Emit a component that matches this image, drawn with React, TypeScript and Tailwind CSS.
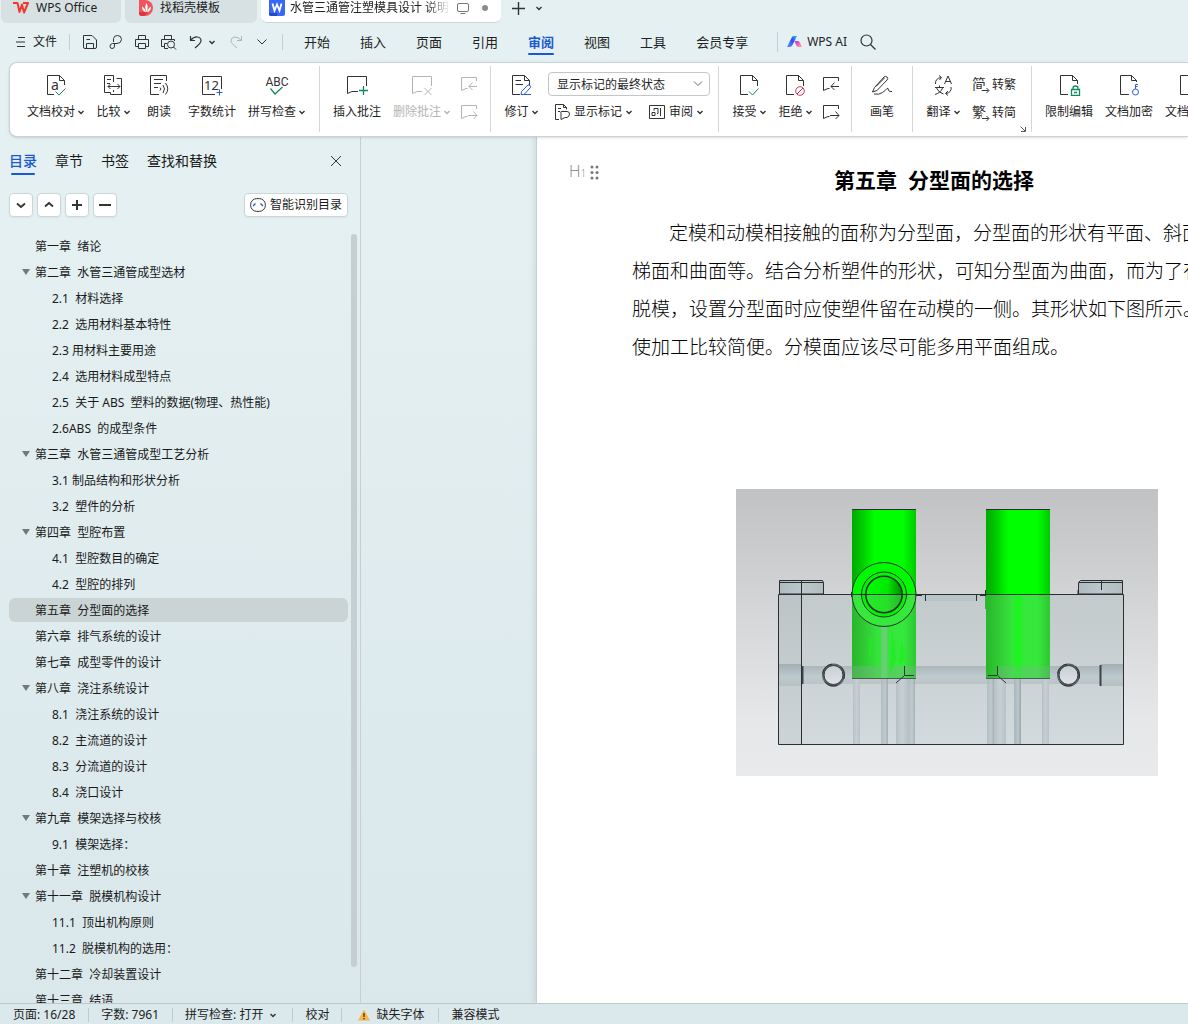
import React, { useState } from "react";

type Kids = { children?: React.ReactNode };

const INK = "#333333";
const GREEN = "#0f8a5f";
const BLUE = "#2b59e0";

/* ---------- icons ---------- */

function Ico({ children, w = 24, h = 22, color = INK }: Kids & { w?: number; h?: number; color?: string }) {
  return (
    <svg width={w} height={h} viewBox={`0 0 ${w} ${h}`} fill="none" stroke={color} strokeWidth="1" className="block shrink-0" aria-hidden="true">
      {children}
    </svg>
  );
}

function Chevron({ color = INK }: { color?: string }) {
  return (
    <svg width="6" height="16" viewBox="0 0 6 16" fill="none" stroke={color} strokeWidth="1.4" className="block shrink-0" aria-hidden="true">
      <path d="M.5 7 3 9.500 5.500 7" />
    </svg>
  );
}

const DocSheet = () => <path d="M11 20.500H3.500V1.500H15.500L20.500 6.500V12M15.500 1.500V6.500H20.500" />;

const ProofIcon = () => (
  <Ico>
    <path d="M10 20.500H3.500V1.500H15.500L20.500 6.500V11M15.500 1.500V6.500H20.500" />
    <text x="7" y="16" fontSize="14" fill={INK} stroke="none" fontFamily="Noto Sans">a</text>
    <path d="M11.500 17.500 15 21 21.500 14.500" stroke={GREEN} />
  </Ico>
);
const CompareIcon = () => (
  <Ico>
    <path d="M12.500 5V1.500H3.500V18.500H9.500V20.500H20.500V4.500H15.500M12.500 8V4.500M12.500 18V16M6 5.500H10M6 9.500H9M7 12.500H19M9.500 10 7 12.500 9.500 15M16.500 10 19 12.500 16.500 15" />
  </Ico>
);
const ReadIcon = () => (
  <Ico>
    <path d="M19.500 7V1.500H3.500V20.500H12M7 5.500H16M7 9.500H14M7 13.500H11M13 13.500Q15 15 13 16.500M16 11Q19 15 16 19M18.500 9Q23 15 18.500 20.500" />
  </Ico>
);
const CountIcon = () => (
  <Ico>
    <path d="M15 20.500H2.500V2.500H21.500V15" />
    <text x="4" y="15.500" fontSize="13" fill={INK} stroke="none" fontFamily="Noto Sans">12</text>
    <path d="M16.500 18.500H22.500M19.500 15.500V21.500" stroke={BLUE} />
  </Ico>
);
const SpellIcon = () => (
  <Ico>
    <text x="12" y="12" fontSize="12" textAnchor="middle" fill={INK} stroke="none" fontFamily="Roboto">ABC</text>
    <path d="M5.500 14.500 10 20 17.500 13" stroke={GREEN} strokeWidth="1.200" />
  </Ico>
);
const AddNoteIcon = () => (
  <Ico>
    <path d="M13 17.500H7L2.500 19.500V2.500H21.500V12" />
    <path d="M14 16.500H23M18.500 12V21" stroke={GREEN} strokeWidth="1.300" />
  </Ico>
);
const DelNoteIcon = () => (
  <Ico color="#b4b4b4">
    <path d="M12 17.500H7L2.500 19.500V2.500H21.500V12M14.500 14 21.500 21M21.500 14 14.500 21" />
  </Ico>
);
const StepIcon = ({ next = false, color = INK }: { next?: boolean; color?: string }) => (
  <Ico w={18} h={16} color={color}>
    <path d="M16.500 5V1.500H1.500V14.500L6 12.500H7.500" />
    {next ? <path d="M8 11.500H17M13.500 7.500 17 11.500 13.500 15" /> : <path d="M9 10.500H17M12.500 6.500 9 10.500 12.500 14" />}
  </Ico>
);
const ReviseIcon = () => (
  <Ico>
    <DocSheet />
    <path d="M6.500 6.500H12M6.500 10.500H14" />
    <path d="M12.500 17.500 19 11Q20 10.500 21 11.500T21.500 13.500L15 20.500H12Z M13 20.500H22" stroke={BLUE} />
  </Ico>
);
const AcceptIcon = () => (
  <Ico>
    <DocSheet />
    <path d="M12 17.500 15.500 21 21.500 14.500" stroke={GREEN} />
  </Ico>
);
const RejectIcon = () => (
  <Ico>
    <DocSheet />
    <g stroke="#cc3657"><circle cx="17" cy="17" r="4.300" /><path d="M14 20 20 14" /></g>
  </Ico>
);
const LockIcon = () => (
  <Ico>
    <path d="M11 20.500H3.500V1.500H15.500L20.500 6.500V10M15.500 1.500V6.500H20.500" />
    <path d="M14.500 15.500H22.500V21.500H14.500ZM16 15.500V14Q16 12 18.500 12T21 14V15.500M17 18.500H20" stroke={GREEN} strokeWidth="1.300" />
  </Ico>
);
const KeyIcon = () => (
  <Ico>
    <path d="M12 20.500H3.500V1.500H14.500L19.500 6.500V8M14.500 1.500V6.500H19.500" />
    <g stroke={BLUE}><circle cx="18.500" cy="18" r="3" /><path d="M18.500 15V10.500H21M18.500 12.500H20.500" /></g>
  </Ico>
);
const PenIcon = () => (
  <Ico>
    <path d="M2.500 18 4.500 13.500 14 3Q15.500 1.800 17 3T17 6L7 16.500ZM6 12.500 14.500 4M4 20Q9 21 12.500 18.500T17 14.500Q18.500 14 18.500 16T22 17.500" />
  </Ico>
);
const TranslateIcon = () => (
  <Ico>
    <path d="M4.500 10Q4 4.500 10 3.500M8 1.500 10.500 3.500 8.500 6M13.500 10 17 2 20.500 10M14.500 7.500H19.500M4 13.500H13M8.500 11.500V13.500M11.500 14Q10 18.500 4 20.500M5.500 14Q7.500 18.500 12.500 20M20 13Q21 18.500 15 19.500M17 17 14.500 19.500 17 21.500" />
  </Ico>
);
const ConvertGlyph = ({ glyph }: { glyph: string }) => (
  <svg width="18" height="18" viewBox="0 0 18 18" className="block shrink-0" aria-hidden="true">
    <text x="0" y="13" fontSize="14" fill={INK} fontFamily="Noto Sans CJK SC">{glyph}</text>
    <path d="M10 10H18V18H10Z" fill="#fff" />
    <path d="M10 14.500H16.500M14.500 12 17 14.500 14.500 17" fill="none" stroke={INK} />
  </svg>
);
const MarkupIcon = () => (
  <Ico w={16} h={18}>
    <path d="M5 16.500H1.500V1.500H9.500L12.500 4.500V6.500M9.500 1.500V4.500H12.500M4 5.500H7M4 8.500H6M6.500 9.500Q6.500 8.500 8 8.500H13Q15.500 8.500 15.500 11T13 14.500H11L7 16.500V9.500" />
  </Ico>
);
const PaneIcon = () => (
  <Ico w={16} h={16}>
    <path d="M.5 1.500H15.500V14.500H.5ZM11.500 4V12M3 11.500V8.500H6V11.500ZM5 6.500V4.500H9V9.500H8" />
  </Ico>
);

/* ---------- ribbon ---------- */

function Tool({ icon, label, menu, dim }: { icon: React.ReactNode; label: string; menu?: boolean; dim?: boolean }) {
  return (
    <button className={`flex min-w-[46px] shrink-0 flex-col items-center gap-2 px-1.5 pt-[11px] ${dim ? "text-[#b4b4b4]" : "text-[#1f1f1f]"}`}>
      {icon}
      <span className="flex items-center gap-[3px] text-xs leading-4 whitespace-nowrap">
        {label}
        {menu && <Chevron color={dim ? "#b4b4b4" : INK} />}
      </span>
    </button>
  );
}

function Sep({ wide }: { wide?: boolean }) {
  return <div className={`mt-[3px] mr-[7px] h-[66px] w-px shrink-0 bg-[#d4d8d9] ${wide ? "ml-2" : "ml-[7px]"}`} />;
}

function Steps({ dim }: { dim?: boolean }) {
  const color = dim ? "#b4b4b4" : INK;
  return (
    <div className="flex w-[26px] shrink-0 flex-col items-center gap-3 pt-[13px]">
      <button aria-label="上一条"><StepIcon color={color} /></button>
      <button aria-label="下一条"><StepIcon next color={color} /></button>
    </div>
  );
}

function Ribbon() {
  return (
    <section aria-label="审阅" className="relative z-10 ml-[9px] flex h-[75px] shrink-0 overflow-hidden rounded-l-lg border border-r-0 border-[#c8d3d5] bg-white pl-[11px] shadow-sm">
      <Tool icon={<ProofIcon />} label="文档校对" menu />
      <Tool icon={<CompareIcon />} label="比较" menu />
      <Tool icon={<ReadIcon />} label="朗读" />
      <Tool icon={<CountIcon />} label="字数统计" />
      <Tool icon={<SpellIcon />} label="拼写检查" menu />
      <div className="w-px" />
      <Sep wide />
      <Tool icon={<AddNoteIcon />} label="插入批注" />
      <Tool icon={<DelNoteIcon />} label="删除批注" menu dim />
      <Steps dim />
      <Sep wide />
      <Tool icon={<ReviseIcon />} label="修订" menu />
      <div className="ml-1 flex w-[162px] shrink-0 flex-col gap-[7px] pt-[9px]">
        <div className="relative">
          <select aria-label="显示状态" className="block h-6 w-full appearance-none rounded border border-[#c3c6c8] bg-white pt-px pl-2 text-xs text-[#1f1f1f]">
            <option>显示标记的最终状态</option>
            <option>显示标记的原始状态</option>
          </select>
          <svg width="10" height="6" viewBox="0 0 10 6" fill="none" stroke="#666" className="pointer-events-none absolute top-[9px] right-[7px]"><path d="M1 .5 5 4.500 9 .5" /></svg>
        </div>
        <div className="flex h-[18px] items-center justify-between pr-[7px] pl-1.5 text-xs leading-4 text-[#1f1f1f]">
          <button className="flex items-center gap-1"><MarkupIcon />显示标记<Chevron /></button>
          <button className="flex items-center gap-1"><PaneIcon />审阅<Chevron /></button>
        </div>
      </div>
      <Sep wide />
      <Tool icon={<AcceptIcon />} label="接受" menu />
      <Tool icon={<RejectIcon />} label="拒绝" menu />
      <Steps />
      <Sep />
      <Tool icon={<PenIcon />} label="画笔" />
      <Sep />
      <Tool icon={<TranslateIcon />} label="翻译" menu />
      <div className="relative flex w-[58px] shrink-0 flex-col gap-2.5 pt-[13px] pl-1.5 text-xs text-[#1f1f1f]">
        <button className="flex h-[18px] items-center gap-0.5 whitespace-nowrap"><ConvertGlyph glyph="简" />转繁</button>
        <button className="flex h-[18px] items-center gap-0.5 whitespace-nowrap"><ConvertGlyph glyph="繁" />转简</button>
        <svg width="6" height="6" viewBox="0 0 6 6" fill="none" stroke="#555" className="absolute -right-0.5 bottom-1"><path d="M.5 .5 5 5M5.500 1V5.500H1" /></svg>
      </div>
      <Sep />
      <Tool icon={<LockIcon />} label="限制编辑" />
      <Tool icon={<KeyIcon />} label="文档加密" />
      <Tool icon={<Ico><DocSheet /></Ico>} label="文档权限" />
    </section>
  );
}

/* ---------- window tabs and menu ---------- */

function WindowTabs() {
  return (
    <div className="flex h-[23px] shrink-0 items-start gap-1 pl-px text-xs text-[#222]">
      <button className="flex h-[23px] w-[120px] items-center gap-1.5 rounded-b-md bg-[#d7e1e3] pb-[7px] pl-3">
        <svg width="17" height="14" viewBox="0 0 17 14" fill="none" stroke="#f0392b" strokeWidth="2"><path d="M0 2H4.500L6.500 11 9 3.500 11 11.500 15 2H10" strokeLinejoin="round" /></svg>
        WPS Office
      </button>
      <button className="flex h-[23px] w-[132px] items-center gap-[7px] rounded-b-md bg-[#d7e1e3] pb-[7px] pl-3.5">
        <svg width="14" height="16" viewBox="0 0 14 16"><path d="M0 0H6A8 8 0 0 1 6 16H3Q0 16 0 13Z" fill="#f2545b" /><path d="M0 12H9Q7 16 3 16 0 16 0 13Z" fill="#dc3340" /><path d="M7.500 3Q10 7 7.500 12 5 7 7.500 3ZM3 6.500Q6 8 7 12.500 3 11 3 6.500ZM12 6.500Q12 11 8 12.500 9 8 12 6.500Z" fill="#fff" /></svg>
        找稻壳模板
      </button>
      <div className="flex h-[23px] w-[240px] items-center rounded-b-md border-b border-[#cdd7d9] bg-white pr-3 pb-1.5 pl-2">
        <svg width="16" height="16" viewBox="0 0 16 16" className="mr-[5px] shrink-0"><path d="M0 0H16V14Q16 16 14 16H2Q0 16 0 14Z" fill="#3a66f5" /><path d="M0 13H8V16H2Q0 16 0 14Z" fill="#2349c9" /><path d="M3.500 3.500 5.500 10.500 8 4.500 10.500 10.500 12.500 3.500" fill="none" stroke="#fff" strokeWidth="1.800" /></svg>
        <span className="w-[160px] shrink-0 overflow-hidden mask-r-from-85% whitespace-nowrap">水管三通管注塑模具设计 说明书</span>
        <svg width="12" height="11" viewBox="0 0 12 11" fill="none" stroke="#777" className="ml-[7px] shrink-0"><rect x=".5" y=".5" width="11" height="8" rx="1.500" /><path d="M3.500 10.500H8.500" /></svg>
        <span className="ml-[13px] size-1.5 shrink-0 rounded-full bg-[#8a8a8a]" />
      </div>
      <button aria-label="新建标签" className="ml-1.5 pt-px">
        <svg width="15" height="15" viewBox="0 0 15 15" stroke="#333" strokeWidth="1.400"><path d="M1 7.500H14M7.500 1V14" /></svg>
      </button>
      <button aria-label="标签列表" className="ml-1.5"><Chevron /></button>
    </div>
  );
}

const MENUS = ["开始", "插入", "页面", "引用", "审阅", "视图", "工具", "会员专享"];

function MenuRow() {
  return (
    <nav className="flex h-[39px] shrink-0 items-center pb-px text-[#222]">
      <button className="ml-4 flex items-center gap-[7px] text-xs">
        <Ico w={10} h={12}><path d="M2 1.500H9M0 6H9M1 10.500H9" /></Ico>
        文件
      </button>
      <div className="ml-3 h-4 w-px bg-[#c3ced0]" />
      <div className="flex items-center">
        <button aria-label="保存" className="ml-3"><Ico w={16} h={16}><path d="M13 14.500H3Q1.500 14.500 1.500 13V1.500H10L14.500 6V13Q14.500 14.500 13 14.500M4.500 14V9.500H11.500V14M4.500 5.500H8" /></Ico></button>
        <button aria-label="输出" className="ml-2.5"><Ico w={16} h={16}><path d="M5.500 8V4.500Q6 1.500 9.500 1.500 13.500 1.500 13.500 5.500 13 9.500 9 9.500H4.500Q2 10 2 12.200T4 14.500Q6.500 14.500 6.500 12V9.500" /></Ico></button>
        <button aria-label="打印" className="ml-2.5"><Ico w={16} h={16}><path d="M4.500 5.500V1.500H11.500V5.500M4 12.500H1.500V5.500H14.500V12.500H12M4.500 9.500H11.500V14.500H4.500Z" /></Ico></button>
        <button aria-label="打印预览" className="ml-2.5"><Ico w={17} h={16}><path d="M4.500 5.500V1.500H11.500V5.500M4 12.500H1.500V5.500H14.500V7M4.500 14.500V9.500H7M4.500 14.500H8" /><circle cx="11" cy="10.500" r="3.500" /><path d="M13.500 13 16 15.500" /></Ico></button>
        <button aria-label="撤销" className="ml-3 flex items-center gap-1.5"><Ico w={14} h={14}><path d="M1.500 1V5.500H6M1.500 5.500Q5 1.500 8.500 2 12 2.500 12 6 12 8 6 13" strokeWidth="1.200" /></Ico><Chevron /></button>
        <button aria-label="恢复" className="ml-3.5"><Ico w={14} h={14} color="#adb6b8"><path d="M12.500 1V5.500H8M12.500 5.500Q9 1.500 5.500 2 2 2.500 2 6 2 8 8 13" /></Ico></button>
        <button aria-label="更多" className="ml-[13px]"><Ico w={12} h={8}><path d="M1.500 1.500 6 6 10.500 1.500" /></Ico></button>
      </div>
      <div className="ml-3.5 h-4 w-px bg-[#c3ced0]" />
      <div className="ml-[21px] flex gap-[30px] text-[13px]">
        {MENUS.map((m) =>
          m === "审阅" ? (
            <button key={m} className="relative leading-5 font-bold whitespace-nowrap text-[#1a5ad0]">
              {m}
              <span className="absolute inset-x-0 -bottom-[3px] h-0.5 rounded-full bg-[#1a5ad0]" />
            </button>
          ) : (
            <button key={m} className="leading-5 whitespace-nowrap">{m}</button>
          ),
        )}
      </div>
      <div className="ml-[29px] h-5 w-px bg-[#c3ced0]" />
      <button className="ml-2 flex items-center gap-1 text-xs whitespace-nowrap">
        <svg width="17" height="14" viewBox="0 0 17 14">
          <defs>
            <linearGradient id="aiA" x1="0" y1="1" x2="1" y2="0"><stop offset="0" stopColor="#6a8bff" /><stop offset=".6" stopColor="#2a4df0" /><stop offset="1" stopColor="#2fc4ff" /></linearGradient>
            <linearGradient id="aiB" x1="0" y1="0" x2="1" y2="1"><stop offset="0" stopColor="#8a3cf0" /><stop offset=".5" stopColor="#f55fc0" /><stop offset="1" stopColor="#ffb37a" /></linearGradient>
          </defs>
          <path d="M1 12 6 2Q6.500 1 8 1H11L6.500 10Q5.500 12 3.500 12Z" fill="url(#aiA)" />
          <path d="M8.500 6H12Q13 6 13.500 7L16 12H12.500Q11 12 10.500 11Z" fill="url(#aiB)" />
        </svg>
        WPS AI
      </button>
      <button aria-label="搜索" className="ml-3"><Ico w={18} h={18}><circle cx="7.500" cy="7.500" r="5.500" strokeWidth="1.200" /><path d="M11.500 11.500 16.500 16.500" strokeWidth="1.200" /></Ico></button>
    </nav>
  );
}

/* ---------- outline pane ---------- */

type Entry = { t: string; sub?: boolean; open?: boolean; here?: boolean };
const TOC: Entry[] = [
  { t: "第一章  绪论" },
  { t: "第二章  水管三通管成型选材", open: true },
  { t: "2.1  材料选择", sub: true },
  { t: "2.2  选用材料基本特性", sub: true },
  { t: "2.3 用材料主要用途", sub: true },
  { t: "2.4  选用材料成型特点", sub: true },
  { t: "2.5  关于 ABS  塑料的数据(物理、热性能)", sub: true },
  { t: "2.6ABS  的成型条件", sub: true },
  { t: "第三章  水管三通管成型工艺分析", open: true },
  { t: "3.1 制品结构和形状分析", sub: true },
  { t: "3.2  塑件的分析", sub: true },
  { t: "第四章  型腔布置", open: true },
  { t: "4.1  型腔数目的确定", sub: true },
  { t: "4.2  型腔的排列", sub: true },
  { t: "第五章  分型面的选择", here: true },
  { t: "第六章  排气系统的设计" },
  { t: "第七章  成型零件的设计" },
  { t: "第八章  浇注系统设计", open: true },
  { t: "8.1  浇注系统的设计", sub: true },
  { t: "8.2  主流道的设计", sub: true },
  { t: "8.3  分流道的设计", sub: true },
  { t: "8.4  浇口设计", sub: true },
  { t: "第九章  模架选择与校核", open: true },
  { t: "9.1  模架选择：", sub: true },
  { t: "第十章  注塑机的校核" },
  { t: "第十一章  脱模机构设计", open: true },
  { t: "11.1  顶出机构原则", sub: true },
  { t: "11.2  脱模机构的选用：", sub: true },
  { t: "第十二章  冷却装置设计" },
  { t: "第十三章  结语" },
];

const SMALL_BTN = "flex size-6 items-center justify-center rounded border border-[#cbd6d8] bg-white shadow-xs";

function Outline() {
  const [tab, setTab] = useState("目录");
  return (
    <aside className="flex w-[361px] shrink-0 flex-col overflow-hidden border-r border-[#c9cfd1] text-[#1a1a1a]">
      <div className="flex items-center pt-3.5 pr-[18px] pl-[9px]">
        <div className="flex gap-[18px] text-sm leading-5">
          {["目录", "章节", "书签", "查找和替换"].map((t) => (
            <button key={t} onClick={() => setTab(t)} className={tab === t ? "relative font-medium text-[#1a5ad0]" : "relative"}>
              {t}
              {tab === t && <span className="absolute inset-x-0.5 -bottom-1 h-0.5 rounded-full bg-[#1a5ad0]" />}
            </button>
          ))}
        </div>
        <button aria-label="关闭" className="ml-auto"><Ico w={12} h={12}><path d="M1 1 11 11M11 1 1 11" /></Ico></button>
      </div>
      <div className="mt-[22px] flex gap-1 pr-3 pl-[9px]">
        <button aria-label="展开" className={SMALL_BTN}><Ico w={12} h={12}><path d="M2 4.500 6 8 10 4.500" strokeWidth="1.800" /></Ico></button>
        <button aria-label="收起" className={SMALL_BTN}><Ico w={12} h={12}><path d="M2 7.500 6 4 10 7.500" strokeWidth="1.800" /></Ico></button>
        <button aria-label="增加级别" className={SMALL_BTN}><Ico w={12} h={12}><path d="M1 6H11M6 1V11" strokeWidth="2" /></Ico></button>
        <button aria-label="减少级别" className={SMALL_BTN}><Ico w={12} h={12}><path d="M0 6H12" strokeWidth="2" /></Ico></button>
        <button className="ml-auto flex h-6 items-center gap-1 rounded border border-[#cbd6d8] bg-white px-[5px] text-xs shadow-xs">
          <Ico w={16} h={16}><rect x=".6" y="1.600" width="14.800" height="12.800" rx="6.200" /><path d="M3 9 5.500 6.500M13 9 10.500 6.500" stroke={BLUE} strokeWidth="1.400" /></Ico>
          智能识别目录
        </button>
      </div>
      <div className="mt-4 flex min-h-0 flex-1">
        <ul className="min-w-0 flex-1 overflow-hidden pl-[9px]">
          {TOC.map((e) => (
            <li key={e.t} className="py-px">
              <a href="#doc" className={`flex h-6 items-center rounded-md pt-0.5 text-xs whitespace-pre ${e.here ? "bg-[#cbd4d5]" : ""} ${e.sub ? "pl-[43px]" : "pl-[13px]"}`}>
                {!e.sub && (
                  <svg width="8" height="6" viewBox="0 0 8 6" className="mr-[5px] mb-0.5"><path d={e.open ? "M0 0H8L4 6Z" : ""} fill="#737878" /></svg>
                )}
                {e.t}
              </a>
            </li>
          ))}
        </ul>
        <div className="mr-[3px] ml-[3px] w-1.5 shrink-0 pt-px pb-9"><div className="h-full rounded-full bg-[#c5cfd1]" /></div>
      </div>
    </aside>
  );
}

/* ---------- document ---------- */

const LINE = "#2b2f31";

function Pipe({ x, w, y = 189, fill = "url(#rod)", o = 1 }: { x: number; w: number; y?: number; fill?: string; o?: number }) {
  return <rect x={x} y={y} width={w} height={255 - y} fill={fill} opacity={o} />;
}

function MoldDrawing() {
  return (
    <svg viewBox="0 0 422 287" width="422" height="287" className="block shrink-0" role="img" aria-label="分型面形状图">
      <defs>
        <linearGradient id="back" x1="0" y1="0" x2="0" y2="1"><stop offset="0" stopColor="#c1c2c3" /><stop offset=".8" stopColor="#e6e7e8" /><stop offset="1" stopColor="#e9eaeb" /></linearGradient>
        <linearGradient id="block" x1="0" y1="0" x2="0" y2="1"><stop offset="0" stopColor="#c2cacc" /><stop offset="1" stopColor="#d2dadd" /></linearGradient>
        <linearGradient id="side" x1="0" y1="0" x2="0" y2="1"><stop offset="0" stopColor="#bdc4c6" /><stop offset="1" stopColor="#ccd4d7" /></linearGradient>
        <linearGradient id="tube"><stop offset="0" stopColor="#00a800" /><stop offset=".16" stopColor="#00cc00" /><stop offset=".35" stopColor="#00ff00" /><stop offset=".8" stopColor="#00ff00" /><stop offset="1" stopColor="#00c800" /></linearGradient>
        <linearGradient id="low"><stop offset="0" stopColor="#2ab52c" /><stop offset=".25" stopColor="#32d036" /><stop offset=".4" stopColor="#34e43a" /><stop offset=".8" stopColor="#36e83c" /><stop offset="1" stopColor="#2cc830" /></linearGradient>
        <linearGradient id="hpipe" x1="0" y1="0" x2="0" y2="1"><stop offset="0" stopColor="#a3b0b2" /><stop offset=".6" stopColor="#bcc9ce" /><stop offset="1" stopColor="#b6c0c2" /></linearGradient>
        <linearGradient id="rod"><stop offset="0" stopColor="#a9b7bb" /><stop offset=".6" stopColor="#b9c6cb" /><stop offset="1" stopColor="#98a4a8" /></linearGradient>
        <linearGradient id="pale"><stop offset="0" stopColor="#b7c1c4" /><stop offset=".5" stopColor="#c6d0d4" /><stop offset="1" stopColor="#b9c3c6" /></linearGradient>
        <linearGradient id="cap"><stop offset="0" stopColor="#aebabe" /><stop offset=".5" stopColor="#bac8cd" /><stop offset="1" stopColor="#b3bdbf" /></linearGradient>
        <linearGradient id="bolt" x1="0" y1="0" x2="0" y2="1"><stop offset="0" stopColor="#c9ced2" /><stop offset="1" stopColor="#e0e4e7" /></linearGradient>
        <linearGradient id="bore"><stop offset="0" stopColor="#00ff00" /><stop offset=".6" stopColor="#00e800" /><stop offset="1" stopColor="#008c00" /></linearGradient>
        <clipPath id="above"><rect x="100" y="60" width="100" height="45" /></clipPath>
        <clipPath id="below"><rect x="100" y="106" width="100" height="45" /></clipPath>
      </defs>
      <rect width="422" height="287" fill="url(#back)" />
      <rect x="42" y="105" width="346" height="151" fill="url(#block)" />
      <rect x="42" y="105" width="23" height="151" fill="url(#side)" />

      <path d="M43.500 105V91.500H86.500L87.500 93.500V105Z" fill="url(#cap)" stroke={LINE} />
      <path d="M43.500 93.500H87.500M65.500 92V105" stroke={LINE} />
      <path d="M342.500 105V93.500L344.500 91.500H386.500V105Z" fill="url(#cap)" stroke={LINE} />
      <path d="M343 93.500H386.500M365.500 92V101M342 101V105" stroke={LINE} />

      <rect x="66" y="177" width="298" height="18" fill="url(#hpipe)" opacity=".8" />
      <rect x="43" y="175" width="22" height="22" fill="url(#hpipe)" />
      <rect x="365" y="175" width="22" height="22" fill="url(#hpipe)" />
      <path d="M66.500 177V195M364.500 176V197" stroke="#3c4446" strokeWidth="2" />

      <Pipe x={117} w={7} fill="url(#pale)" />
      <Pipe x={160} w={12} fill="url(#pale)" />
      <Pipe x={172} w={7} o={0.75} />
      <Pipe x={251} w={7} o={0.75} />
      <Pipe x={258} w={12} fill="url(#pale)" />
      <Pipe x={278} w={7} />
      <Pipe x={306} w={7} fill="url(#pale)" />

      <rect x="116" y="20" width="64" height="85" fill="url(#tube)" />
      <rect x="116" y="105" width="64" height="85" fill="url(#low)" />
      <rect x="116" y="177" width="64" height="13" fill="#8ba89c" opacity=".35" />
      <path d="M133 145V176L137 155ZM156 140 154 188 160 170ZM166 150 163 175 169 170Z" fill="#19f01e" opacity=".7" />
      <Pipe x={145} w={7} y={137} o={0.8} />
      <rect x="145" y="137" width="7" height="52" fill="#4fd65a" opacity=".75" />
      <rect x="250" y="20" width="64" height="85" fill="url(#tube)" />
      <rect x="250" y="105" width="64" height="85" fill="url(#low)" />
      <rect x="278" y="106" width="8" height="83" fill="#1ff422" />
      <rect x="261" y="177" width="53" height="13" fill="#8ba89c" opacity=".3" />
      <path d="M249.500 106V120" stroke="#35b838" />
      <path d="M116 20.500H180M250 20.500H314" stroke={LINE} />
      <path d="M116 189.500H180M250 189.500H314" stroke="#47614c" />

      <circle cx="148" cy="105.500" r="32" fill="#00fa00" clipPath="url(#above)" />
      <circle cx="148" cy="105.500" r="32" fill="#36e83c" clipPath="url(#below)" />
      <circle cx="148" cy="105.500" r="22.500" fill="#00f600" />
      <circle cx="148" cy="105.500" r="18" fill="url(#bore)" />
      <circle cx="148" cy="105.500" r="18" fill="#45d94a" opacity=".55" clipPath="url(#below)" />
      <g fill="none" stroke={LINE}>
        <circle cx="148" cy="105.500" r="32" />
        <circle cx="148" cy="105.500" r="22.500" />
        <circle cx="148" cy="105.500" r="18.200" strokeWidth="1.600" />
        <path d="M42.500 105.500H387.500V255.500H42.500ZM65.500 105.500V255.500" />
      </g>

      <path d="M184 106H246L240 112H189Z" fill="#b7c5ca" />
      <path d="M189.500 106V112M240.500 106V112M180 106.500H186M244 106.500H250M115.500 103V108M249.500 101V106" stroke={LINE} />
      <path d="M168.500 177V186.500H178M168 187 160 194M261.500 177V186.500H252M262 187 270 194" fill="none" stroke="#303638" />

      {[97.5, 332.5].map((cx) => (
        <g key={cx}>
          <circle cx={cx} cy="186" r="10.500" fill="url(#bolt)" stroke="#59666a" strokeWidth="2" />
          <circle cx={cx} cy="186" r="11" fill="none" stroke="#2d3335" strokeDasharray="14 9" strokeDashoffset="10" />
          <circle cx={cx} cy="186" r="9.500" fill="none" stroke="#33393b" />
        </g>
      ))}
    </svg>
  );
}

const BODY_LINES = [
  "梯面和曲面等。结合分析塑件的形状，可知分型面为曲面，而为了有利",
  "脱模，设置分型面时应使塑件留在动模的一侧。其形状如下图所示。为",
  "使加工比较简便。分模面应该尽可能多用平面组成。",
];

function Paper() {
  return (
    <main id="doc" className="min-w-0 flex-1 overflow-hidden pl-[175px]">
      <article className="flex h-full w-[795px] border-l border-[#c6cfd2] bg-white pr-[95px] text-black shadow-[-2px_0_5px_rgba(120,140,150,0.2)]">
        <div className="flex w-[95px] shrink-0 items-start gap-1 pt-[26px] pl-8 text-[#808080]">
          <span className="flex h-4 items-end font-['Open_Sans'] text-base leading-4 font-light">H<small className="text-[10px] leading-[11px]">1</small></span>
          <svg width="9" height="15" viewBox="0 0 9 15" fill="#777" className="mt-0.5">
            {[2, 7.500, 13].map((y) => (
              <g key={y}><circle cx="2" cy={y} r="1.500" /><circle cx="7" cy={y} r="1.500" /></g>
            ))}
          </svg>
        </div>
        <div className="min-w-0 flex-1 whitespace-nowrap">
          <h1 className="pt-[27px] text-center text-[21px] leading-8 font-bold">第五章<span className="inline-block w-[11px]" />分型面的选择</h1>
          <p className="mt-[18px] text-[19px] leading-[38px] font-light">
            <span className="block pl-[37px]">定模和动模相接触的面称为分型面，分型面的形状有平面、斜面、阶</span>
            {BODY_LINES.map((l) => <span key={l} className="block">{l}</span>)}
          </p>
          <figure className="mt-[123px] flex justify-center pl-[26px]"><MoldDrawing /></figure>
        </div>
      </article>
    </main>
  );
}

/* ---------- status bar ---------- */

const Bar = () => <span className="mx-3 h-3.5 w-px bg-[#bccbd0]" />;

function StatusBar() {
  return (
    <footer className="flex h-[21px] shrink-0 items-center border-t border-[#bac8cc] bg-[#dbe8ec] pt-0.5 pl-[13px] text-xs whitespace-nowrap text-[#222]">
      <span className="pr-px">页面: 16/28</span>
      <Bar />
      <span className="pr-px">字数: 7961</span>
      <Bar />
      <button className="flex items-center gap-[7px] pr-1">拼写检查: 打开<Chevron /></button>
      <Bar />
      <button>校对</button>
      <Bar />
      <button className="ml-1 flex items-center gap-1.5 pr-0.5">
        <svg width="12" height="12" viewBox="0 0 12 12"><path d="M6 .5 12 11.500H0Z" fill="#f5b84c" strokeLinejoin="round" /><path d="M6 4V8M6 9V10.500" stroke="#5b3b00" strokeWidth="1.400" /></svg>
        缺失字体
      </button>
      <Bar />
      <span>兼容模式</span>
    </footer>
  );
}

export default function App() {
  return (
    <div className="flex h-screen flex-col overflow-hidden bg-linear-to-b from-[#e4f0f1] from-20% to-[#dae7eb] font-['Noto_Sans','Noto_Sans_CJK_SC',sans-serif]">
      <WindowTabs />
      <MenuRow />
      <Ribbon />
      <div className="flex min-h-0 flex-1">
        <Outline />
        <Paper />
      </div>
      <StatusBar />
    </div>
  );
}
